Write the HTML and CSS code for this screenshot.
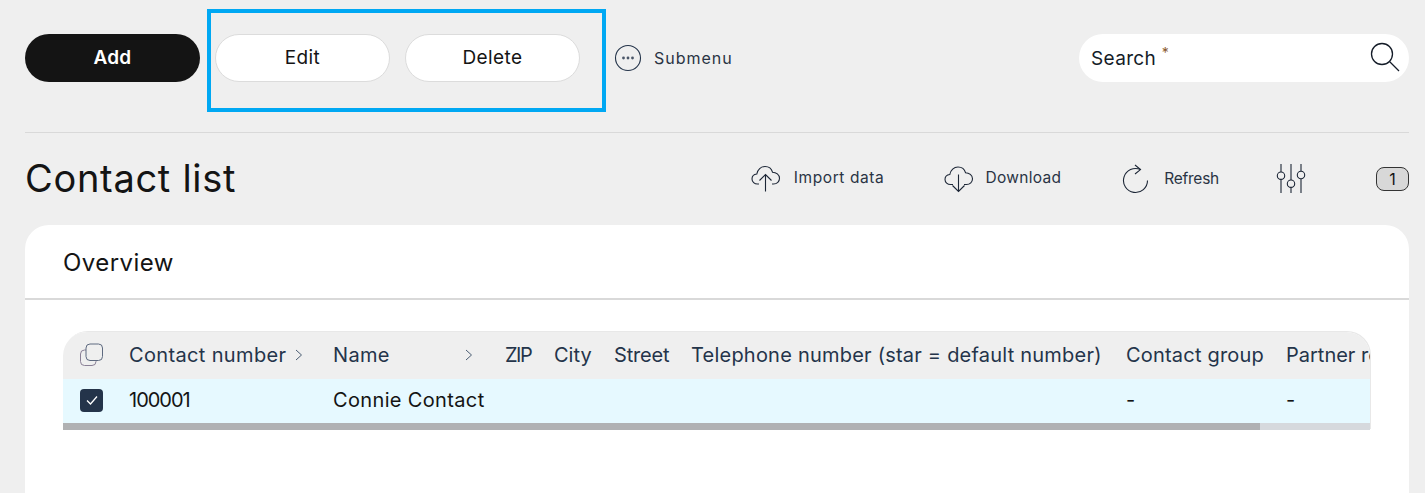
FILE: index.html
```html
<!DOCTYPE html>
<html lang="en">
<head>
<meta charset="utf-8">
<title>Contact list</title>
<link rel="stylesheet" href="styles.css">
</head>
<body>
<div class="page">
  <header class="toolbar">
    <button class="btn btn-dark">Add</button>
    <div class="group">
      <button class="btn btn-light">Edit</button>
      <button class="btn btn-light">Delete</button>
      <div class="highlight"></div>
    </div>
    <div class="submenu">
      <svg class="ic-sub" width="28" height="28" viewBox="0 0 28 28"><ellipse cx="14" cy="14" rx="12.500" ry="12.500" fill="none" stroke="#24344a" stroke-width="1.100"/><circle cx="9.500" cy="14" r="1.400" fill="#4a5668"/><circle cx="14" cy="14" r="1.400" fill="#4a5668"/><circle cx="18.500" cy="14" r="1.400" fill="#4a5668"/></svg>
      <span>Submenu</span>
    </div>
    <div class="search">
      <span class="search-label">Search <sup>*</sup></span>
      <svg width="32" height="32" viewBox="0 0 32 32"><circle cx="13" cy="12" r="10.500" fill="none" stroke="#141c28" stroke-width="1.300"/><path d="M20.500 19.500L30 29" fill="none" stroke="#141c28" stroke-width="1.300"/></svg>
    </div>
  </header>
  <div class="rule"></div>
  <section class="titlebar">
    <h1>Contact list</h1>
    <div class="actions">
      <div class="action a-import">
        <svg width="30" height="28" viewBox="0 0 30 28"><path d="M8 19H6.500C3.500 19 1 16.800 1 14s2-4.700 4.800-5C6.500 4.500 10 1.500 14 1.500c3.700 0 6.600 2.300 7.500 5.700 3.600 0 7 2.600 7 6 0 3.300-2.500 5.800-6 5.800H21" fill="none" stroke="#1c2636" stroke-width="1.100"/><path d="M14.500 26.500V10M8.500 15.500l6-6 6 6" fill="none" stroke="#1c2636" stroke-width="1.100"/></svg>
        <span>Import data</span>
      </div>
      <div class="action a-download">
        <svg width="30" height="28" viewBox="0 0 30 28"><path d="M9 19.500H6.500C3.500 19.500 1 17.300 1 14.500s2-4.700 4.800-5C6.500 5 10 2 14 2c3.700 0 6.600 2.300 7.500 5.700 3.600 0 7 2.600 7 6 0 3.300-2.500 5.800-6 5.800H20" fill="none" stroke="#1c2636" stroke-width="1.100"/><path d="M14.500 9.500V26.500M8.500 20.500l6 6 6-6" fill="none" stroke="#1c2636" stroke-width="1.100"/></svg>
        <span>Download</span>
      </div>
      <div class="action a-refresh">
        <svg width="28" height="30" viewBox="0 0 28 30"><path d="M18.500 5.600A12 12 0 1 0 25.500 16.500" fill="none" stroke="#1c2636" stroke-width="1.100"/><path d="M13 1l5.500 4.600L13 10" fill="none" stroke="#1c2636" stroke-width="1.100"/></svg>
        <span>Refresh</span>
      </div>
      <svg class="sliders" width="30" height="30" viewBox="0 0 30 30"><g fill="none" stroke="#1c2636" stroke-width="1.100"><path d="M5 0v8M5 15.500V29M15 0v16M15 23.500V29M25 0v7M25 15V29"/><circle cx="5" cy="11.700" r="3.700"/><circle cx="15" cy="19.700" r="3.700"/><circle cx="25" cy="11" r="3.700"/></g></svg>
      <span class="count">1</span>
    </div>
  </section>
  <main class="card">
    <h2>Overview</h2>
    <div class="table-wrap">
      <div class="table">
        <div class="row head">
          <div class="c c0"><svg width="26" height="26" viewBox="0 0 26 26"><rect x="1.500" y="8" width="15.500" height="15.500" rx="4" fill="none" stroke="#8a8096" stroke-width="1"/><rect x="7" y="2" width="16.500" height="16.500" rx="4" fill="#efefef" stroke="#5e6a80" stroke-width="1"/></svg></div>
          <div class="c c1">Contact number<svg class="chev" width="8" height="12" viewBox="0 0 8 12"><path d="M1 1l5.500 5L1 11" fill="none" stroke="#4a5c72" stroke-width="1"/></svg></div>
          <div class="c c2">Name<svg class="chev" width="8" height="12" viewBox="0 0 8 12"><path d="M1 1l5.500 5L1 11" fill="none" stroke="#4a5c72" stroke-width="1"/></svg></div>
          <div class="c c3 t-zip">ZIP</div>
          <div class="c c4 t-city">City</div>
          <div class="c c5 t-street">Street</div>
          <div class="c c6">Telephone number (star = default number)</div>
          <div class="c c7">Contact group</div>
          <div class="c c8">Partner role</div>
        </div>
        <div class="row body">
          <div class="c c0"><span class="check"><svg width="14" height="12" viewBox="0 0 14 12"><path d="M2 6.500l3.500 3.500L12 2.500" fill="none" stroke="#fff" stroke-width="1.300"/></svg></span></div>
          <div class="c c1 t-num">100001</div>
          <div class="c c2">Connie Contact</div>
          <div class="c c3"></div>
          <div class="c c4"></div>
          <div class="c c5"></div>
          <div class="c c6"></div>
          <div class="c c7">-</div>
          <div class="c c8">-</div>
        </div>
      </div>
      <div class="scroll"><div class="thumb"></div></div>
    </div>
  </main>
</div>
</body>
</html>
```

FILE: styles.css
```css
* { box-sizing: border-box; }
html, body { margin: 0; height: 493px; overflow: hidden; }
body { background: #efefef; font-family: Inter, "Liberation Sans", sans-serif; color: #141414; }
.page { padding: 34px 16px 0 25px; }

.toolbar { display: flex; align-items: center; height: 48px; }
.btn { width: 175px; height: 48px; border-radius: 24px; font: 400 19px Inter, sans-serif; letter-spacing: 0.4px; padding: 0 0 2px; }
.btn-dark { background: #141414; border: 0; color: #fff; font-weight: 600; font-size: 19px; letter-spacing: 0.2px; }
.btn-light { background: #fff; border: 1px solid #dcdcdc; color: #141414; }
.group { position: relative; display: flex; gap: 15px; margin-left: 15px; }
.highlight { position: absolute; left: -8px; top: -25px; width: 399px; height: 103px; border: 4px solid #00a8f3; pointer-events: none; }
.submenu { display: flex; align-items: center; gap: 12px; margin-left: 34px; font-size: 16px; letter-spacing: 1px; color: #2a3444; }
.search { margin-left: auto; width: 330px; height: 48px; background: #fff; border-radius: 24px; display: flex; align-items: center; justify-content: space-between; padding: 0 8px 0 12px; font-size: 19px; letter-spacing: 0.35px; }
.search-label { color: #141c28; }
.search sup { font-size: 14px; color: #8a5a30; line-height: 0; }

.rule { height: 1px; background: #d9d9d9; margin-top: 50px; }

.titlebar { display: flex; justify-content: space-between; align-items: center; height: 92px; }
h1 { margin: 0 0 2px; font-size: 38px; font-weight: 400; letter-spacing: 0.7px; color: #141414; }
.actions { display: flex; align-items: center; font-size: 15.500px; color: #2a3444; }
.action { display: flex; align-items: center; gap: 13px; }
.action span { padding-bottom: 3px; }
.a-import span { letter-spacing: 0.6px; }
.a-download { margin-left: 60px; gap: 11px; }
.a-download span { letter-spacing: 0.3px; }
.a-refresh { margin-left: 61px; gap: 14px; }
.a-refresh span { padding-bottom: 1px; letter-spacing: -0.25px; }
.sliders { margin-left: 57px; }
.count { margin-left: 70px; width: 33px; height: 24px; border: 1px solid #333; border-radius: 8px; background: #d8d8d8; display: flex; align-items: center; justify-content: center; font-size: 16px; color: #141414; }

.card { background: #fff; border-radius: 24px 24px 0 0; height: 268px; }
h2 { margin: 0; height: 75px; padding: 1px 38px 0; display: flex; align-items: center; font-size: 24px; font-weight: 400; letter-spacing: 0.45px; color: #141414; border-bottom: 2px solid #d9d9d9; }
.table-wrap { margin: 32px 39px 0 38px; border-radius: 24px 24px 0 0; overflow: hidden; box-shadow: 1px -1px 0 #e8e8e8; }
.table { width: 1307px; overflow: hidden; }
.row { display: flex; align-items: center; white-space: nowrap; font-size: 20px; letter-spacing: 0.35px; }
.head { height: 47px; background: #efefef; color: #24344a; padding-bottom: 1px; }
.body { height: 44px; background: #e6f9ff; color: #141414; padding-bottom: 2px; }
.c { flex: none; display: flex; align-items: center; }
.c0 { width: 66px; padding-left: 16px; }
.c1 { width: 204px; gap: 9px; }
.c2 { width: 172px; justify-content: space-between; padding-right: 32px; }
.c3 { width: 49px; }
.c4 { width: 60px; }
.c5 { width: 77px; }
.c6 { width: 435px; letter-spacing: 0.22px; }
.c7 { width: 160px; letter-spacing: 0.2px; }
.c8 { width: 84px; overflow: hidden; letter-spacing: 0; }
.t-zip { letter-spacing: -1.500px; }
.t-city { letter-spacing: 0; }
.t-street { letter-spacing: -0.2px; }
.t-num { letter-spacing: -1px; }
.check { width: 23px; height: 23px; margin-left: 1px; border-radius: 4px; background: #24344a; display: flex; align-items: center; justify-content: center; }
.scroll { height: 7px; width: 1307px; background: #d6d9dd; }
.thumb { width: 1197px; height: 7px; background: #b0b1b3; }
```
